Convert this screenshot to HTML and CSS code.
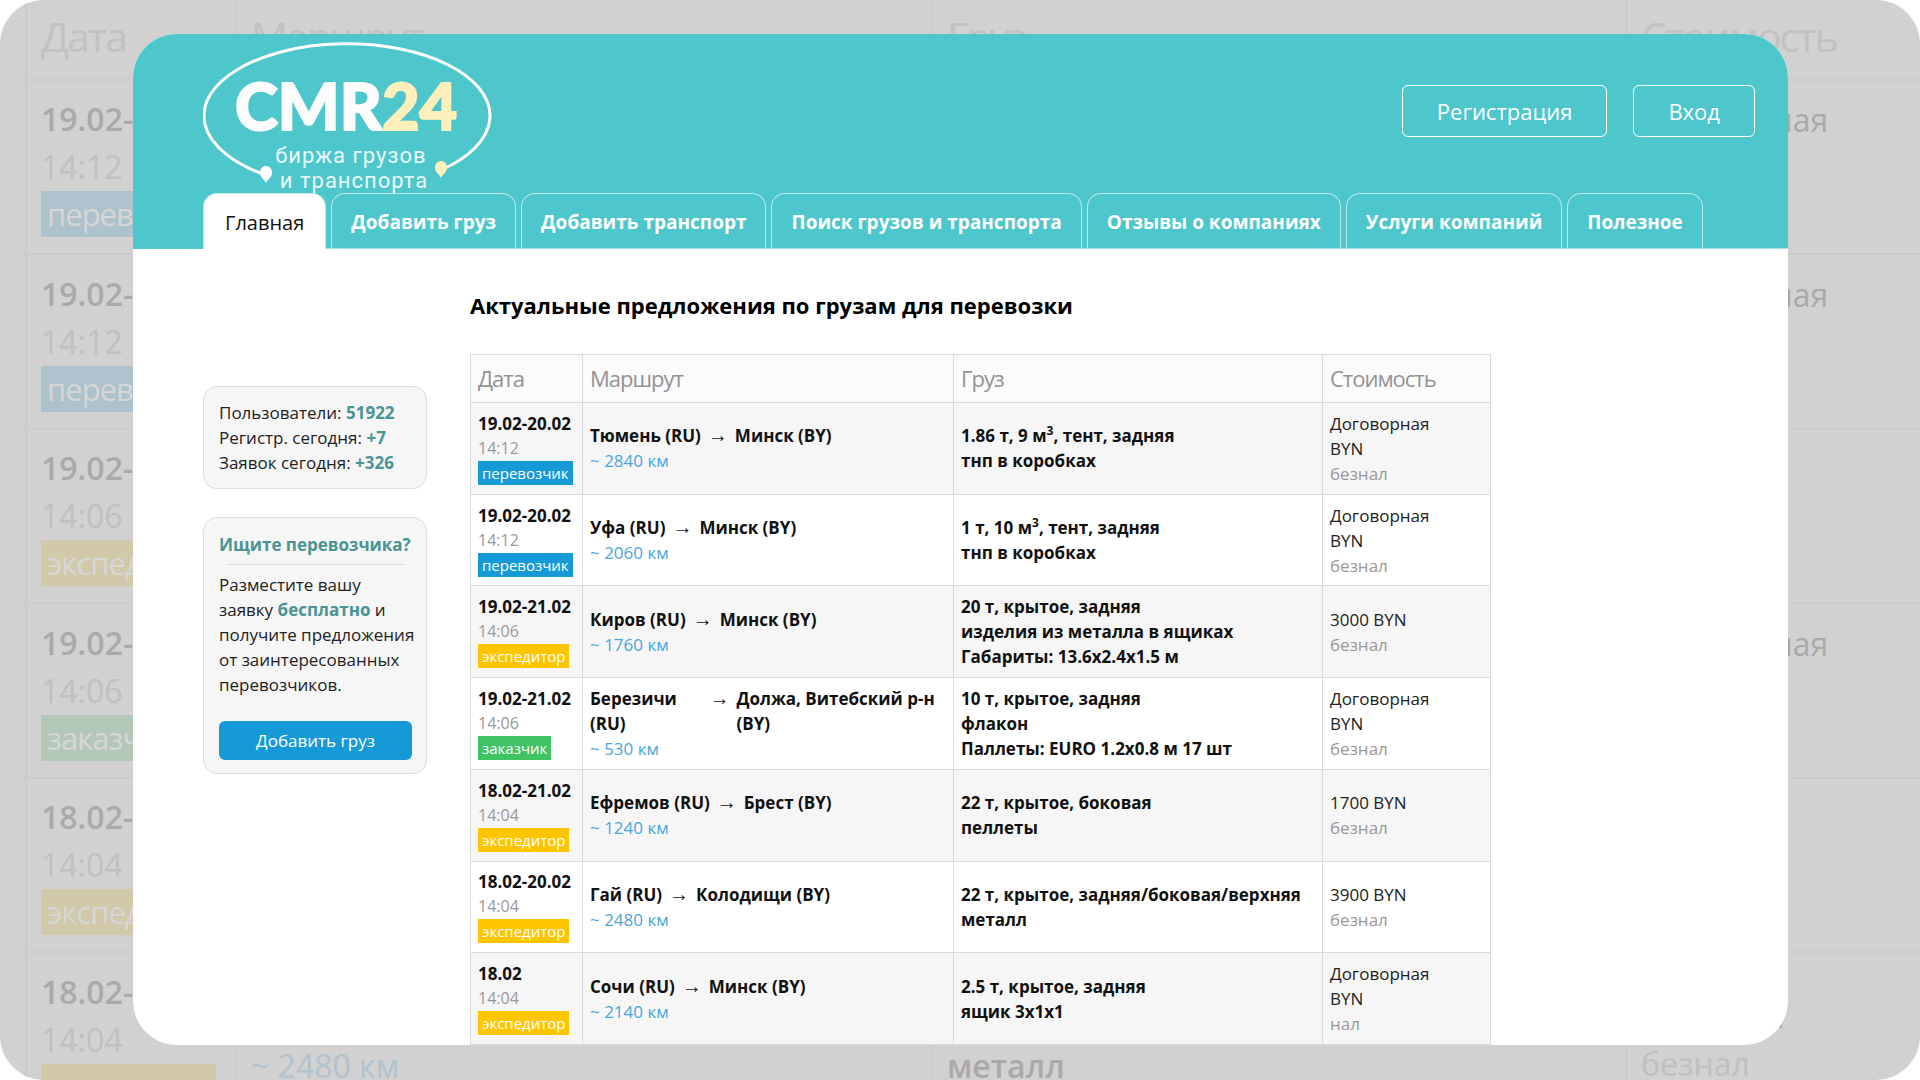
FILE: index.html
```html
<!DOCTYPE html>
<html lang="ru">
<head>
<meta charset="utf-8">
<meta name="viewport" content="width=device-width, initial-scale=1">
<title>CMR24 — биржа грузов и транспорта</title>
<link rel="stylesheet" href="styles.css">
</head>
<body>
<div class="stage">
  <div class="backdrop" aria-hidden="true">
    <table class="ghost">
      <colgroup><col class="ghost-date"><col class="ghost-route"><col class="ghost-cargo"><col></colgroup>
      <thead><tr><th>Дата</th><th>Маршрут</th><th>Груз</th><th>Стоимость</th></tr></thead>
      <tbody>
        <tr><td><b>19.02-20.02</b><span class="time">14:12</span><span class="tag carrier">перевозчик</span></td><td></td><td></td><td class="ghost-first">Договорная</td></tr>
        <tr><td><b>19.02-20.02</b><span class="time">14:12</span><span class="tag carrier">перевозчик</span></td><td></td><td></td><td class="ghost-first">Договорная</td></tr>
        <tr><td><b>19.02-21.02</b><span class="time">14:06</span><span class="tag forwarder">экспедитор</span></td><td></td><td></td><td></td></tr>
        <tr><td><b>19.02-21.02</b><span class="time">14:06</span><span class="tag customer">заказчик</span></td><td></td><td></td><td class="ghost-first">Договорная</td></tr>
        <tr><td><b>18.02-21.02</b><span class="time">14:04</span><span class="tag forwarder">экспедитор</span></td><td></td><td></td><td></td></tr>
        <tr><td><b>18.02-20.02</b><span class="time">14:04</span><span class="tag forwarder">экспедитор</span></td><td class="ghost-second"><span class="distance">~ 2480 км</span></td><td class="ghost-second"><b>металл</b></td><td>3900 BYN<br><span class="pay">безнал</span></td></tr>
      </tbody>
    </table>
  </div>

  <div class="card">
    <header class="header">
      <div class="topbar">
        <a class="logo" href="#" aria-label="CMR24 биржа грузов и транспорта">
          <svg width="290" height="151" viewBox="0 0 290 151">
            <path d="M60 132A143 72 0 1 1 238 128" fill="none" stroke="#fff" stroke-width="3"/>
            <path d="M63 124c4 0 6 3 6 7 0 4-4 6-6 10-2-4-6-6-6-10 0-4 2-7 6-7z" fill="#fff"/>
            <path d="M238 119c4 0 6 3 6 7 0 4-4 6-6 10-2-4-6-6-6-10 0-4 2-7 6-7z" fill="#ffefba"/>
            <text class="logo-name" x="32" y="88">CMR<tspan class="logo-num">24</tspan></text>
            <text class="logo-sub" x="148" y="121">биржа грузов</text>
            <text class="logo-sub" x="151" y="146">и транспорта</text>
          </svg>
        </a>
        <div class="account">
          <button class="account-btn" type="button">Регистрация</button>
          <button class="account-btn" type="button">Вход</button>
        </div>
      </div>
      <nav class="tabs">
        <a class="tab active" href="#">Главная</a>
        <a class="tab" href="#">Добавить груз</a>
        <a class="tab" href="#">Добавить транспорт</a>
        <a class="tab" href="#">Поиск грузов и транспорта</a>
        <a class="tab" href="#">Отзывы о компаниях</a>
        <a class="tab" href="#">Услуги компаний</a>
        <a class="tab" href="#">Полезное</a>
      </nav>
    </header>

    <div class="content">
      <aside class="sidebar">
        <section class="box">
          <p>Пользователи: <b>51922</b></p>
          <p>Регистр. сегодня: <b>+7</b></p>
          <p>Заявок сегодня: <b>+326</b></p>
        </section>
        <section class="box promo">
          <h2>Ищите перевозчика?</h2>
          <hr>
          <p>Разместите вашу заявку&nbsp;<b>бесплатно</b> и получите предложения от заинтересованных перевозчиков.</p>
          <button class="promo-btn" type="button">Добавить груз</button>
        </section>
      </aside>

      <main>
        <h1>Актуальные предложения по грузам для перевозки</h1>
        <table class="offers">
          <colgroup><col class="col-date"><col class="col-route"><col class="col-cargo"><col></colgroup>
          <thead><tr><th>Дата</th><th>Маршрут</th><th>Груз</th><th>Стоимость</th></tr></thead>
          <tbody>
            <tr>
              <td><b>19.02-20.02</b><span class="time">14:12</span><span class="tag carrier">перевозчик</span></td>
              <td><div class="route"><span>Тюмень (RU)</span><span class="arrow">→</span><span>Минск (BY)</span></div><span class="distance">~ 2840 км</span></td>
              <td><b>1.86 т, 9 м<sup>3</sup>, тент, задняя</b><b>тнп в коробках</b></td>
              <td>Договорная<br>BYN<br><span class="pay">безнал</span></td>
            </tr>
            <tr>
              <td><b>19.02-20.02</b><span class="time">14:12</span><span class="tag carrier">перевозчик</span></td>
              <td><div class="route"><span>Уфа (RU)</span><span class="arrow">→</span><span>Минск (BY)</span></div><span class="distance">~ 2060 км</span></td>
              <td><b>1 т, 10 м<sup>3</sup>, тент, задняя</b><b>тнп в коробках</b></td>
              <td>Договорная<br>BYN<br><span class="pay">безнал</span></td>
            </tr>
            <tr>
              <td><b>19.02-21.02</b><span class="time">14:06</span><span class="tag forwarder">экспедитор</span></td>
              <td><div class="route"><span>Киров (RU)</span><span class="arrow">→</span><span>Минск (BY)</span></div><span class="distance">~ 1760 км</span></td>
              <td><b>20 т, крытое, задняя</b><b>изделия из металла в ящиках</b><b>Габариты: 13.6x2.4x1.5 м</b></td>
              <td>3000 BYN<br><span class="pay">безнал</span></td>
            </tr>
            <tr>
              <td><b>19.02-21.02</b><span class="time">14:06</span><span class="tag customer">заказчик</span></td>
              <td><div class="route"><span>Березичи (RU)</span><span class="arrow">→</span><span>Должа, Витебский р-н (BY)</span></div><span class="distance">~ 530 км</span></td>
              <td><b>10 т, крытое, задняя</b><b>флакон</b><b>Паллеты: EURO 1.2x0.8 м 17 шт</b></td>
              <td>Договорная<br>BYN<br><span class="pay">безнал</span></td>
            </tr>
            <tr>
              <td><b>18.02-21.02</b><span class="time">14:04</span><span class="tag forwarder">экспедитор</span></td>
              <td><div class="route"><span>Ефремов (RU)</span><span class="arrow">→</span><span>Брест (BY)</span></div><span class="distance">~ 1240 км</span></td>
              <td><b>22 т, крытое, боковая</b><b>пеллеты</b></td>
              <td>1700 BYN<br><span class="pay">безнал</span></td>
            </tr>
            <tr>
              <td><b>18.02-20.02</b><span class="time">14:04</span><span class="tag forwarder">экспедитор</span></td>
              <td><div class="route"><span>Гай (RU)</span><span class="arrow">→</span><span>Колодищи (BY)</span></div><span class="distance">~ 2480 км</span></td>
              <td><b>22 т, крытое, задняя/боковая/верхняя</b><b>металл</b></td>
              <td>3900 BYN<br><span class="pay">безнал</span></td>
            </tr>
            <tr>
              <td><b>18.02</b><span class="time">14:04</span><span class="tag forwarder">экспедитор</span></td>
              <td><div class="route"><span>Сочи (RU)</span><span class="arrow">→</span><span>Минск (BY)</span></div><span class="distance">~ 2140 км</span></td>
              <td><b>2.5 т, крытое, задняя</b><b>ящик 3x1x1</b></td>
              <td>Договорная<br>BYN<br><span class="pay">нал</span></td>
            </tr>
          </tbody>
        </table>
      </main>
    </div>
  </div>
</div>
</body>
</html>
```
FILE: styles.css
```css
* { box-sizing: border-box; }
body {
  margin: 0;
  background: #fff;
  color: #222;
  font: 17px/25px "Open Sans", "Noto Sans", sans-serif;
}
h1, h2, p { margin: 0; }
a { text-decoration: none; }
button { font-family: inherit; cursor: pointer; }
b { font-weight: 700; }
table { border-collapse: collapse; table-layout: fixed; }
th { text-align: left; font-weight: 400; }

.stage {
  position: relative;
  height: 100vh;
  padding: 34px 132px 35px 133px;
  background: #d1d1d1;
  border-radius: 44px;
  overflow: hidden;
}

/* Enlarged, faded table behind the card */
.backdrop {
  position: absolute;
  inset: 0;
  overflow: hidden;
}
.ghost {
  width: calc(100% + 20px);
  margin-left: 25px;
  color: #aaa;
  font-size: 32px;
  line-height: 48px;
}
.ghost-date { width: 210px; }
.ghost-route { width: 696px; }
.ghost-cargo { width: 694px; }
.ghost th {
  height: 80px;
  padding: 0 14px 8px;
  border: 2px solid #cbcbcb;
  border-top: 0;
  font-size: 41px;
  color: #c2c2c2;
  letter-spacing: -2px;
}
.ghost td { height: 174px; padding: 0 14px; border: 2px solid #cbcbcb; }
.ghost tr:nth-child(even) td { height: 175px; }
.ghost b { font-weight: 600; }
.ghost .ghost-first { padding-bottom: 94px; }
.ghost .ghost-second { padding-top: 52px; }
.ghost .time, .ghost .pay { color: #c0c0c0; }
.ghost .tag {
  padding: 0 6px;
  font-size: 31px;
  line-height: 46px;
  color: #d6d6d6;
  letter-spacing: -1px;
}
.ghost .carrier { background: #adc2cc; }
.ghost .forwarder { background: #d1c9aa; }
.ghost .customer { background: #b4c8b9; }
.ghost .distance { color: #b0c3ce; }

.card {
  position: relative;
  height: 100%;
  background: #fff;
  border-radius: 44px;
  overflow: hidden;
}

.header { background: #4dc6cc; padding-left: 70px; }
.topbar {
  display: flex;
  justify-content: space-between;
  align-items: flex-start;
  height: 159px;
  padding: 8px 33px 0 0;
}
.logo-name { font: 900 65px Lato, sans-serif; fill: #fcfcfc; stroke: #fcfcfc; stroke-width: 2px; }
.logo-num { fill: #ffefba; stroke: #ffefba; }
.logo-sub { font: 22px Roboto, sans-serif; fill: #e9fafa; text-anchor: middle; letter-spacing: 1px; }
.account { display: flex; gap: 26px; padding-top: 43px; }
.account-btn {
  height: 52px;
  padding: 0 34px;
  border: 1px solid #fff;
  border-radius: 6px;
  background: none;
  color: #fff;
  font-size: 22px;
}

.tabs { display: flex; gap: 5px; border-bottom: 1px solid #a6e2e5; }
.tab {
  height: 55px;
  padding: 0 19px;
  border: 1px solid #b8e8ea;
  border-bottom: 0;
  border-radius: 14px 14px 0 0;
  color: #fff;
  font-size: 19px;
  font-weight: 700;
  line-height: 57px;
  white-space: nowrap;
}
.tab.active {
  height: 56px;
  margin-bottom: -1px;
  padding: 0 21px;
  background: #fff;
  color: #111;
  font-size: 20px;
  font-weight: 500;
}

.content {
  display: grid;
  grid-template-columns: 224px 1fr;
  gap: 43px;
  padding: 0 297px 0 70px;
}
.sidebar { display: flex; flex-direction: column; gap: 28px; padding-top: 137px; }
.box {
  padding: 13px 14px 13px 15px;
  border: 1px solid #ddd;
  border-radius: 14px;
  background: #f6f6f6;
}
.box p { margin-right: -8px; }
.box b, .box h2 { color: #4a9496; font-weight: 700; }
.promo h2 {
  padding-bottom: 6px;
  font-size: 17px;
  line-height: 27px;
  white-space: nowrap;
}
.promo hr { margin: 0 7px 7px; border: 0; border-top: 1px solid #ddd; }
.promo-btn {
  display: block;
  width: 100%;
  height: 39px;
  margin-top: 24px;
  border: 0;
  border-radius: 6px;
  background: #169ad7;
  color: #fff;
  font-size: 17px;
}

h1 {
  padding: 41px 0 33px;
  color: #000;
  font-size: 22px;
  font-weight: 700;
  line-height: 31px;
}
.offers { width: 100%; height: 691px; }
.col-date { width: 112px; }
.col-route { width: 371px; }
.col-cargo { width: 369px; }
.offers th {
  height: 48px;
  padding: 0 7px;
  border: 1px solid #d9dadc;
  background: #fbfbfb;
  color: #939393;
  font-size: 22px;
  letter-spacing: -1px;
}
.offers td { padding: 0 7px; border: 1px solid #d9dadc; }
.offers tbody tr:nth-child(odd) { background: #f6f6f6; }
.offers b, .route { color: #111; font-weight: 700; }
td b, .time, .distance { display: block; }
.time, .pay { color: #999; }
.offers .time { font-size: 16px; }
.tag {
  display: inline-block;
  padding: 0 4px;
  color: #fff;
  font-size: 15px;
  line-height: 24px;
  vertical-align: top;
}
.carrier { background: #169ad7; }
.forwarder { background: #ffc600; }
.customer { background: #40c463; }
.distance { color: #4aa5dc; }
.route { display: flex; gap: 7px; }
.arrow { flex: none; font: 20px/25px "Liberation Serif", serif; }
sup { font-size: 12px; line-height: 0; }
```
